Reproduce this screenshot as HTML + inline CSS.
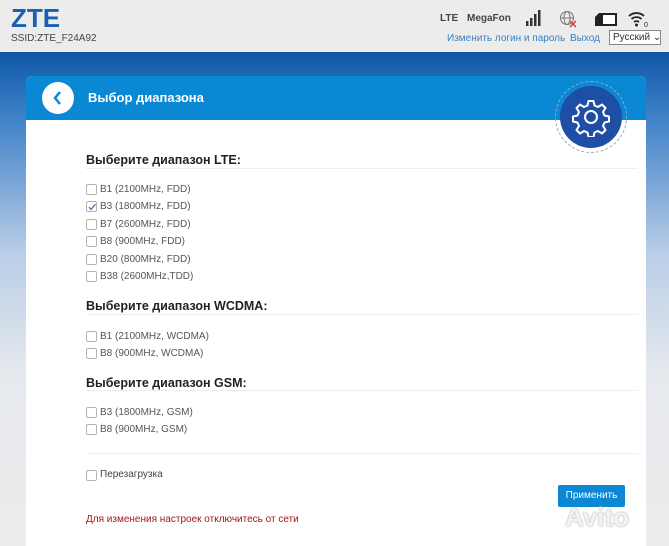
<!DOCTYPE html>
<html><head><meta charset="utf-8"><style>
*{margin:0;padding:0;box-sizing:border-box}
body{width:669px;height:540px;overflow:hidden;position:relative;font-family:"Liberation Sans",sans-serif;background:#ececec}
.hdr{position:absolute;left:0;top:0;width:669px;height:52px;background:#ececec}
.bg{position:absolute;left:0;top:52px;width:669px;height:488px;background:linear-gradient(#0e56a6 0px,#3a7ec6 60px,#b8cde6 200px,#e6e9ee 320px,#ececec 488px)}
.a{position:absolute;white-space:nowrap}
.card{position:absolute;left:26px;top:76px;width:620px;height:470px;background:#fff;border-radius:6px 6px 0 0;overflow:hidden}
.cardh{position:absolute;left:0;top:0;width:620px;height:44px;background:#0a88d4}
.t{font-size:12.5px;font-weight:bold;color:#222}
.ln{position:absolute;left:86px;width:552px;height:1px;background:#eceef0}
.cb{position:absolute;width:11px;height:11px;border:1px solid #b4b4b4;border-radius:2px;background:#fff}
.it{font-size:10px;color:#555}
</style></head><body>
<div class="hdr"></div>
<div class="a" style="left:11px;top:3px;font-size:26px;font-weight:bold;color:#1a5fb4;letter-spacing:0px;">ZTE</div>
<div class="a" style="left:11px;top:33px;font-size:10px;color:#444">SSID:ZTE_F24A92</div>
<div class="a" style="left:440px;top:13px;font-size:10px;font-weight:bold;color:#444">LTE</div>
<div class="a" style="left:467px;top:13px;font-size:10px;font-weight:bold;color:#444">MegaFon</div>
<svg class="a" style="left:524px;top:9px" width="20" height="18"><rect x="2" y="12" width="2.5" height="5" fill="#333"/><rect x="6" y="9" width="2.5" height="8" fill="#333"/><rect x="10" y="5" width="2.5" height="12" fill="#333"/><rect x="14" y="1" width="2.5" height="16" fill="#333"/></svg>
<svg class="a" style="left:559px;top:10px" width="20" height="18"><circle cx="8" cy="8" r="6.5" fill="none" stroke="#777" stroke-width="1"/><ellipse cx="8" cy="8" rx="3" ry="6.5" fill="none" stroke="#777"/><line x1="1.5" y1="8" x2="14.5" y2="8" stroke="#777"/><path d="M11 11l6 6M17 11l-6 6" stroke="#d33" stroke-width="1.3"/></svg>
<svg class="a" style="left:594px;top:12px" width="26" height="16"><path d="M5 1h18v13H1V5z" fill="#222"/><rect x="9" y="3" width="12" height="9" fill="#fff"/></svg>
<svg class="a" style="left:627px;top:10px" width="22" height="18"><path d="M2 6a11 11 0 0 1 15 0M4.5 9a7.5 7.5 0 0 1 10 0M7 12a4 4 0 0 1 5 0" fill="none" stroke="#222" stroke-width="1.8"/><circle cx="9.5" cy="15" r="1.5" fill="#222"/><text x="17" y="17" font-size="7" fill="#222" font-family="Liberation Sans">0</text></svg>
<div class="a" style="left:447px;top:33px;font-size:10px;color:#3a7fc1">Изменить логин и пароль</div>
<div class="a" style="left:570px;top:33px;font-size:10px;color:#3a7fc1">Выход</div>
<div class="a" style="left:609px;top:30px;width:52px;height:15px;border:1px solid #888;background:#fff;font-size:10px;color:#333;padding:1px 0 0 3px">Русский ⌄</div>
<div class="bg"></div>
<div class="card">
<div class="cardh"></div>
<div class="a" style="left:16px;top:6px;width:32px;height:32px;border-radius:50%;background:#fff"></div>
<svg class="a" style="left:26px;top:14px" width="12" height="16"><path d="M8 2L3 8l5 6" fill="none" stroke="#0a88d4" stroke-width="2.5"/></svg>
<div class="a" style="left:62px;top:14px;font-size:13px;font-weight:bold;color:#fff">Выбор диапазона</div>
</div>
<div class="a" style="left:555px;top:81px;width:72px;height:72px;border-radius:50%;border:1px dashed #9ab;background:transparent"></div>
<div class="a" style="left:560px;top:86px;width:62px;height:62px;border-radius:50%;background:#1f4ea6"></div>
<svg class="a" style="left:571px;top:97px" width="40" height="40" viewBox="-20 -20 40 40"><path d="M-2.5-16h5l1 4.5 3.5 1.5 4-2.5 3.5 3.5-2.5 4 1.5 3.5 4.5 1v5l-4.5 1-1.5 3.5 2.5 4-3.5 3.5-4-2.5-3.5 1.5-1 4.5h-5l-1-4.5-3.5-1.5-4 2.5-3.5-3.5 2.5-4-1.5-3.5-4.5-1v-5l4.5-1 1.5-3.5-2.5-4 3.5-3.5 4 2.5 3.5-1.5z" fill="none" stroke="#fff" stroke-width="2" stroke-linejoin="round"/><circle r="6" fill="none" stroke="#fff" stroke-width="2"/></svg>

<div class="a t" style="left:86px;top:153px">Выберите диапазон LTE:</div>
<div class="ln" style="top:168px"></div>
<div class="cb" style="left:86px;top:184px"></div><div class="a it" style="left:100px;top:184px">B1 (2100MHz, FDD)</div>
<div class="cb" style="left:86px;top:201px"></div><svg class="a" style="left:87px;top:202px" width="10" height="10"><path d="M2 5l2 2.5L8.5 2" fill="none" stroke="#3a6fb0" stroke-width="1.2"/></svg><div class="a it" style="left:100px;top:201px">B3 (1800MHz, FDD)</div>
<div class="cb" style="left:86px;top:219px"></div><div class="a it" style="left:100px;top:219px">B7 (2600MHz, FDD)</div>
<div class="cb" style="left:86px;top:236px"></div><div class="a it" style="left:100px;top:236px">B8 (900MHz, FDD)</div>
<div class="cb" style="left:86px;top:254px"></div><div class="a it" style="left:100px;top:254px">B20 (800MHz, FDD)</div>
<div class="cb" style="left:86px;top:271px"></div><div class="a it" style="left:100px;top:271px">B38 (2600MHz,TDD)</div>

<div class="a t" style="left:86px;top:299px">Выберите диапазон WCDMA:</div>
<div class="ln" style="top:314px"></div>
<div class="cb" style="left:86px;top:331px"></div><div class="a it" style="left:100px;top:331px">B1 (2100MHz, WCDMA)</div>
<div class="cb" style="left:86px;top:348px"></div><div class="a it" style="left:100px;top:348px">B8 (900MHz, WCDMA)</div>

<div class="a t" style="left:86px;top:376px">Выберите диапазон GSM:</div>
<div class="ln" style="top:390px"></div>
<div class="cb" style="left:86px;top:407px"></div><div class="a it" style="left:100px;top:407px">B3 (1800MHz, GSM)</div>
<div class="cb" style="left:86px;top:424px"></div><div class="a it" style="left:100px;top:424px">B8 (900MHz, GSM)</div>

<div class="ln" style="top:453px"></div>
<div class="cb" style="left:86px;top:470px"></div><div class="a it" style="left:100px;top:469px;color:#444">Перезагрузка</div>
<div class="a" style="left:558px;top:485px;width:67px;height:22px;background:#0a88d4;border-radius:2px;color:#fff;font-size:10px;text-align:center;line-height:22px">Применить</div>
<div class="a" style="left:86px;top:514px;font-size:10px;color:#a01818">Для изменения настроек отключитесь от сети</div>
<div class="a" style="left:565px;top:502px;font-size:26px;font-weight:bold;color:#f2f2f2;text-shadow:0 0 1px #aaa,0 0 2px #bbb">Avito</div>
</body></html>
